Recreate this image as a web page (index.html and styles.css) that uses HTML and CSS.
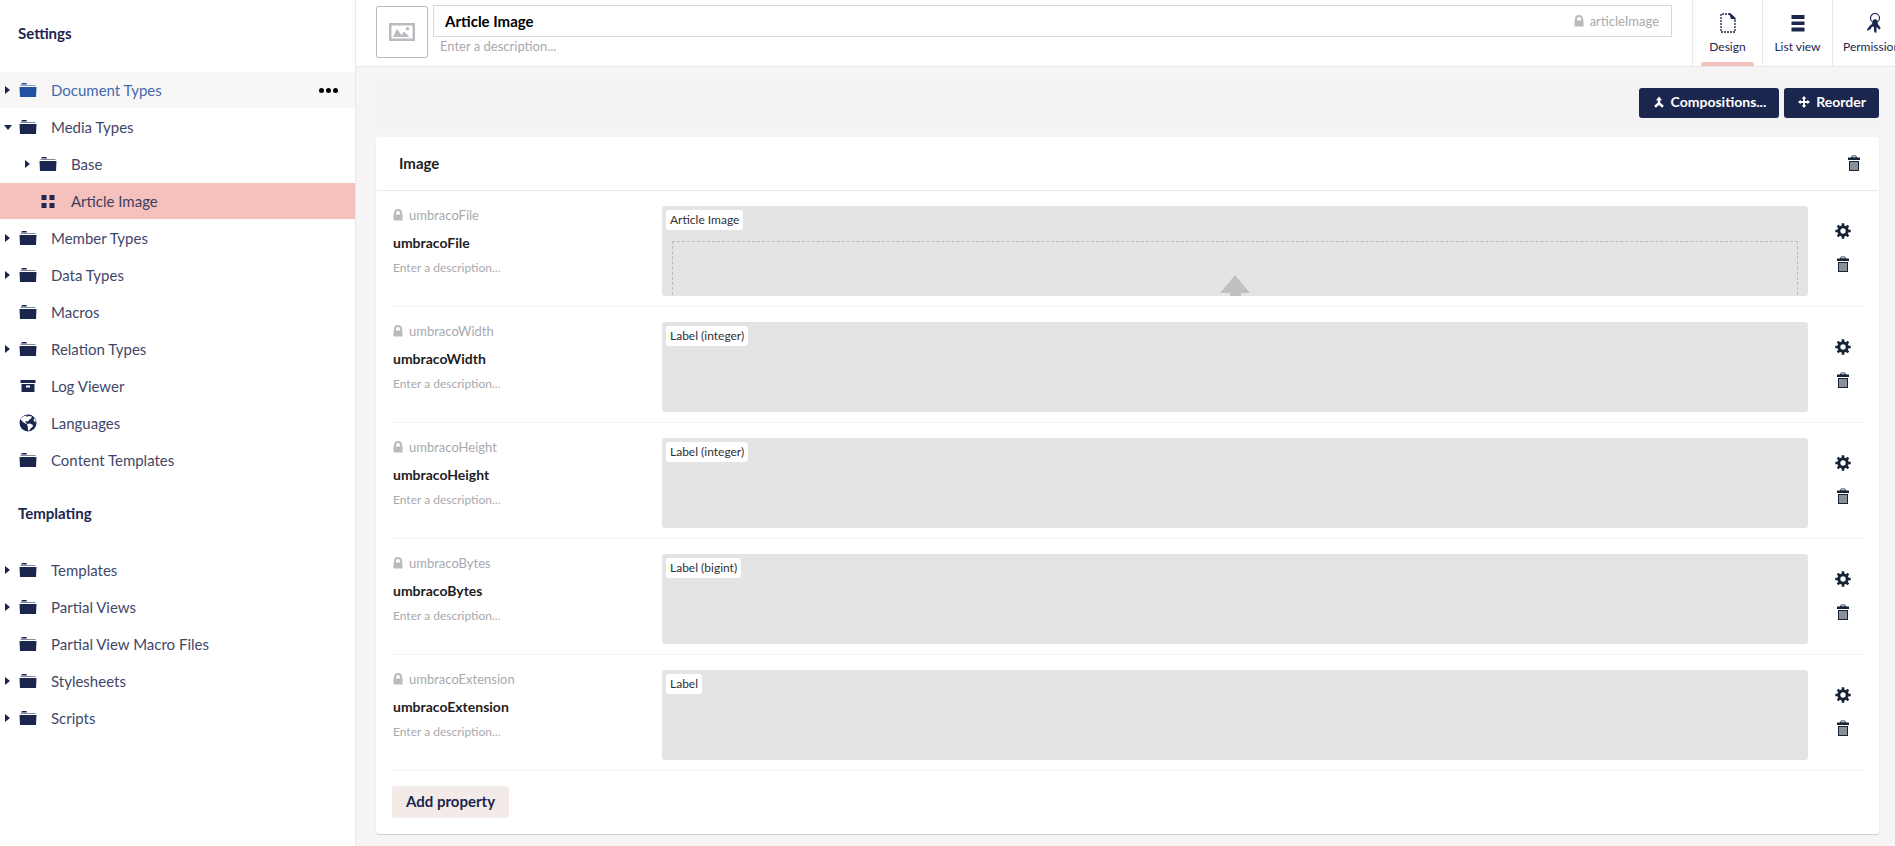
FILE: index.html
```html
<!DOCTYPE html>
<html lang="en">
<head>
    <meta charset="UTF-8">
    <meta name="viewport" content="width=device-width, initial-scale=1.0">
    <title>Article Image - Media Types</title>
    <link rel="stylesheet" href="styles.css">
</head>
<body>
    <svg class="sprite" aria-hidden="true">
        <symbol id="folder" viewBox="0 0 18 18">
            <path d="M2 3.500L3 2h4.500l.5 1.500z"/>
            <path d="M1.500 4h15v1h-15z" opacity=".55"/>
            <path d="M.5 6h17L17 16H1z"/>
        </symbol>
        <symbol id="grid" viewBox="0 0 18 18">
            <path d="M2.500 3h5v5h-5zM10.500 3h5v5h-5zM2.500 11h5v5h-5zM10.500 11h5v5h-5z"/>
        </symbol>
        <symbol id="archive" viewBox="0 0 18 18">
            <path d="M1.500 3h15v3h-15z"/>
            <path fill-rule="evenodd" d="M2.500 7h13v8h-13zM7 8.500v2h4v-2z"/>
        </symbol>
        <symbol id="globe" viewBox="0 0 18 18">
            <circle cx="9" cy="9" r="8.500"/>
            <path fill="#fff" d="M2 4.500L5 2l3-.6L7 3l3-1 3 .5-1 2-1.500 1-1.500 2L7.500 7 6 8l2 1.500-1 .5L4 8 2 6zM8 10l3-.5 3 1.500-.5 2-2 1.500L10 17l-1-1-.2-3zM14.500 5l1.500-.5 1 3-2 .2z"/>
        </symbol>
        <symbol id="lock" viewBox="0 0 10 12">
            <path fill-rule="evenodd" d="M.5 5.500H1V4a4 4 0 0 1 8 0v1.500h.5v6h-9zM3 5.500h4V4a2 2 0 0 0-4 0z"/>
        </symbol>
        <symbol id="picture" viewBox="0 0 26 18">
            <path fill-rule="evenodd" d="M0 0h26v18H0zM2.500 2.500v13h21v-13z"/>
            <path d="M4 14l4-8 4.500 6L15 8.500l5.500 5.500z"/>
            <circle cx="18.500" cy="5.800" r="1.800"/>
        </symbol>
        <symbol id="document" viewBox="0 0 16 20">
            <path fill="none" stroke="currentColor" stroke-width="1.300" stroke-dasharray="2 1" d="M10 1H1v18h14V6"/>
            <path d="M9 .2h1.500L15.600 5v2.500L14 6h-3z"/>
        </symbol>
        <symbol id="list" viewBox="0 0 20 20">
            <path d="M3.500 2h13v4h-13zM3.500 8.500h13v3.500h-13zM3.500 14.500h13v4h-13z"/>
        </symbol>
        <symbol id="keys" viewBox="0 0 14 20">
            <circle cx="8" cy="5" r="4.500" fill="none" stroke="currentColor" stroke-width="1.200"/>
            <path d="M6 7l2.500-1L11 8l-.5 2 1 2 2 2.500-.5 2-1.500-.5-1.500-2-.5 1v4.500l-1.500.2L7 18v-4l-1.500-.5L4 15l-.5 1.500-1.500.3L.5 18 0 16.500l2.500-3.500L5 11z"/>
        </symbol>
        <symbol id="merge" viewBox="0 0 12 12">
            <path d="M6 .5l3 3.800H7.300v2.500l3.500 3-1.600 2L6 9l-3.200 2.800-1.600-2 3.500-3V4.300H3z"/>
        </symbol>
        <symbol id="move" viewBox="0 0 12 12">
            <path d="M6 0l2.300 2.700H6.900v2.400h2.400V3.700L12 6 9.300 8.300V6.900H6.900v2.400h1.400L6 12 3.700 9.300h1.400V6.900H2.700v1.400L0 6l2.700-2.300v1.400h2.400V2.700H3.700z"/>
        </symbol>
        <symbol id="trash" viewBox="0 0 12 16">
            <path d="M0 2.500h3L4 .5h4l1 2h3V5H0zM4.500 1.300l-.5 1h4l-.5-1z" fill-rule="evenodd"/>
            <path fill-rule="evenodd" d="M1 6h10v10H1zM2.500 7v8h1V7zM4.500 7v8h1V7zM6.500 7v8h1V7zM8.500 7v8h1V7z"/>
        </symbol>
        <symbol id="gear" viewBox="0 0 16 16">
            <circle cx="8" cy="8" r="4.200" fill="none" stroke="currentColor" stroke-width="3"/>
            <path fill="none" stroke="currentColor" stroke-width="2.600" d="M8 .3v3M8 12.700v3M.3 8h3M12.700 8h3M2.600 2.600l2 2M11.400 11.400l2 2M2.600 13.400l2-2M11.400 4.600l2-2"/>
        </symbol>
        <symbol id="upload" viewBox="0 0 30 30">
            <path d="M15 0l15 18h-9v12H10V18H0z"/>
        </symbol>
    </svg>

    <div class="app">
        <nav class="sidebar" aria-label="Settings tree">
            <section class="tree">
                <h5>Settings</h5>
                <ul>
                    <li class="hover"><span class="caret"></span><svg class="icon"><use href="#folder"/></svg><a href="#">Document Types</a><button class="dots" aria-label="Options"><i></i><i></i><i></i></button></li>
                    <li><span class="caret open"></span><svg class="icon"><use href="#folder"/></svg><a href="#">Media Types</a></li>
                    <li class="child"><span class="caret"></span><svg class="icon"><use href="#folder"/></svg><a href="#">Base</a></li>
                    <li class="child current"><span class="caret none"></span><svg class="icon"><use href="#grid"/></svg><a href="#">Article Image</a></li>
                    <li><span class="caret"></span><svg class="icon"><use href="#folder"/></svg><a href="#">Member Types</a></li>
                    <li><span class="caret"></span><svg class="icon"><use href="#folder"/></svg><a href="#">Data Types</a></li>
                    <li><span class="caret none"></span><svg class="icon"><use href="#folder"/></svg><a href="#">Macros</a></li>
                    <li><span class="caret"></span><svg class="icon"><use href="#folder"/></svg><a href="#">Relation Types</a></li>
                    <li><span class="caret none"></span><svg class="icon"><use href="#archive"/></svg><a href="#">Log Viewer</a></li>
                    <li><span class="caret none"></span><svg class="icon"><use href="#globe"/></svg><a href="#">Languages</a></li>
                    <li><span class="caret none"></span><svg class="icon"><use href="#folder"/></svg><a href="#">Content Templates</a></li>
                </ul>
            </section>
            <section class="tree">
                <h5>Templating</h5>
                <ul>
                    <li><span class="caret"></span><svg class="icon"><use href="#folder"/></svg><a href="#">Templates</a></li>
                    <li><span class="caret"></span><svg class="icon"><use href="#folder"/></svg><a href="#">Partial Views</a></li>
                    <li><span class="caret none"></span><svg class="icon"><use href="#folder"/></svg><a href="#">Partial View Macro Files</a></li>
                    <li><span class="caret"></span><svg class="icon"><use href="#folder"/></svg><a href="#">Stylesheets</a></li>
                    <li><span class="caret"></span><svg class="icon"><use href="#folder"/></svg><a href="#">Scripts</a></li>
                </ul>
            </section>
        </nav>

        <main class="editor">
            <header class="editor-header">
                <button class="icon-picker" aria-label="Choose icon"><svg><use href="#picture"/></svg></button>
                <div class="name-desc">
                    <div class="name-box">
                        <input type="text" value="Article Image" aria-label="Name">
                        <span class="alias"><svg class="lock"><use href="#lock"/></svg>articleImage</span>
                    </div>
                    <input type="text" class="desc" placeholder="Enter a description..." aria-label="Description">
                </div>
                <div class="apps">
                    <button class="app-tab active"><svg><use href="#document"/></svg>Design</button>
                    <button class="app-tab"><svg><use href="#list"/></svg>List view</button>
                    <button class="app-tab"><svg><use href="#keys"/></svg>Permissions</button>
                </div>
            </header>

            <div class="content">
                <div class="toolbar">
                    <button class="btn"><svg><use href="#merge"/></svg>Compositions...</button>
                    <button class="btn"><svg><use href="#move"/></svg>Reorder</button>
                </div>

                <section class="group">
                    <div class="group-header">
                        <input type="text" value="Image" aria-label="Group name">
                        <button class="tool" aria-label="Delete group"><svg class="trash"><use href="#trash"/></svg></button>
                    </div>
                    <div class="group-body">
                        <div class="property">
                            <div class="meta">
                                <span class="alias"><svg class="lock"><use href="#lock"/></svg>umbracoFile</span>
                                <input type="text" class="label" value="umbracoFile" aria-label="Property name">
                                <input type="text" class="info" placeholder="Enter a description..." aria-label="Property description">
                            </div>
                            <div class="preview">
                                <span class="tag">Article Image</span>
                                <div class="dropzone"><svg><use href="#upload"/></svg></div>
                            </div>
                            <div class="actions">
                                <button class="tool" aria-label="Edit property"><svg class="gear"><use href="#gear"/></svg></button>
                                <button class="tool" aria-label="Delete property"><svg class="trash"><use href="#trash"/></svg></button>
                            </div>
                        </div>
                        <div class="property">
                            <div class="meta">
                                <span class="alias"><svg class="lock"><use href="#lock"/></svg>umbracoWidth</span>
                                <input type="text" class="label" value="umbracoWidth" aria-label="Property name">
                                <input type="text" class="info" placeholder="Enter a description..." aria-label="Property description">
                            </div>
                            <div class="preview"><span class="tag">Label (integer)</span></div>
                            <div class="actions">
                                <button class="tool" aria-label="Edit property"><svg class="gear"><use href="#gear"/></svg></button>
                                <button class="tool" aria-label="Delete property"><svg class="trash"><use href="#trash"/></svg></button>
                            </div>
                        </div>
                        <div class="property">
                            <div class="meta">
                                <span class="alias"><svg class="lock"><use href="#lock"/></svg>umbracoHeight</span>
                                <input type="text" class="label" value="umbracoHeight" aria-label="Property name">
                                <input type="text" class="info" placeholder="Enter a description..." aria-label="Property description">
                            </div>
                            <div class="preview"><span class="tag">Label (integer)</span></div>
                            <div class="actions">
                                <button class="tool" aria-label="Edit property"><svg class="gear"><use href="#gear"/></svg></button>
                                <button class="tool" aria-label="Delete property"><svg class="trash"><use href="#trash"/></svg></button>
                            </div>
                        </div>
                        <div class="property">
                            <div class="meta">
                                <span class="alias"><svg class="lock"><use href="#lock"/></svg>umbracoBytes</span>
                                <input type="text" class="label" value="umbracoBytes" aria-label="Property name">
                                <input type="text" class="info" placeholder="Enter a description..." aria-label="Property description">
                            </div>
                            <div class="preview"><span class="tag">Label (bigint)</span></div>
                            <div class="actions">
                                <button class="tool" aria-label="Edit property"><svg class="gear"><use href="#gear"/></svg></button>
                                <button class="tool" aria-label="Delete property"><svg class="trash"><use href="#trash"/></svg></button>
                            </div>
                        </div>
                        <div class="property">
                            <div class="meta">
                                <span class="alias"><svg class="lock"><use href="#lock"/></svg>umbracoExtension</span>
                                <input type="text" class="label" value="umbracoExtension" aria-label="Property name">
                                <input type="text" class="info" placeholder="Enter a description..." aria-label="Property description">
                            </div>
                            <div class="preview"><span class="tag">Label</span></div>
                            <div class="actions">
                                <button class="tool" aria-label="Edit property"><svg class="gear"><use href="#gear"/></svg></button>
                                <button class="tool" aria-label="Delete property"><svg class="trash"><use href="#trash"/></svg></button>
                            </div>
                        </div>
                        <button class="add">Add property</button>
                    </div>
                </section>
            </div>
        </main>
    </div>
</body>
</html>
```
FILE: styles.css
```css
* {
    box-sizing: border-box;
}
body {
    margin: 0;
    font-family: Lato, sans-serif;
    font-size: 15px;
    line-height: 20px;
    color: #1b264f;
    background: #f6f4f5;
}
button, input {
    font: inherit;
    color: inherit;
    margin: 0;
    padding: 0;
    border: 0;
    background: none;
}
button {
    cursor: pointer;
}
input {
    min-width: 0;
}
input::placeholder {
    color: #a9a9ad;
    opacity: 1;
}
svg {
    display: block;
    flex: none;
    fill: currentColor;
}
.sprite {
    position: absolute;
    width: 0;
    height: 0;
}
.app {
    display: flex;
    min-height: 100vh;
}

/* Tree */
.sidebar {
    flex: 0 0 356px;
    background: #fff;
    border-right: 1px solid #e9e9eb;
}
.tree + .tree {
    margin-top: 2px;
}
.tree h5 {
    margin: 0 0 6px;
    padding: 23px 18px;
    font-size: 15px;
    font-weight: 700;
}
.tree ul {
    margin: 0;
    padding: 0;
    list-style: none;
}
.tree li {
    display: flex;
    align-items: center;
    height: 36px;
    margin-bottom: 1px;
    padding: 0 12px 0 5px;
}
.tree li.child {
    padding-left: 25px;
}
.tree li.hover {
    background: #f9f6f6;
    color: #2152a3;
}
.tree li.current {
    background: #f5c1bc;
}
.tree a {
    flex: 1;
    margin-left: 14px;
    color: inherit;
    text-decoration: none;
    opacity: .85;
}
.icon {
    width: 18px;
    height: 18px;
}
.caret {
    width: 14px;
}
.caret::before {
    content: "";
    display: block;
    width: 0;
    border: solid transparent;
    border-width: 4px 0 4px 5px;
    border-left-color: #1b264f;
}
.caret.open::before {
    margin-left: -1px;
    border-width: 5px 4px 0;
    border-color: #1b264f transparent;
}
.caret.none::before {
    visibility: hidden;
}
.dots {
    display: flex;
    gap: 2px;
    padding: 5px;
}
.dots i {
    width: 5px;
    height: 5px;
    border-radius: 50%;
    background: #000;
}

/* Editor header */
.editor {
    flex: 1;
    min-width: 0;
}
.editor-header {
    display: flex;
    height: 67px;
    padding-left: 20px;
    background: #fff;
    border-bottom: 1px solid #e9e9eb;
    overflow: hidden;
}
.icon-picker {
    display: flex;
    align-items: center;
    justify-content: center;
    width: 52px;
    height: 52px;
    margin-top: 6px;
    border: 1px solid #bbbabf;
    border-radius: 3px;
    color: #bbbabf;
}
.icon-picker svg {
    width: 26px;
    height: 18px;
}
.name-desc {
    flex: 1;
    display: flex;
    flex-direction: column;
    margin: 5px 20px 0 5px;
}
.name-box {
    display: flex;
    align-items: center;
    height: 32px;
    padding: 0 12px 1px 11px;
    border: 1px solid #d8d7d9;
}
.name-box input {
    flex: 1;
    height: 28px;
    font-weight: 700;
    color: #000;
}
.alias {
    display: flex;
    align-items: center;
    gap: 6px;
    line-height: 18px;
    font-size: 13px;
    color: #a9a9ad;
}
.lock {
    width: 10px;
    height: 12px;
    color: #bbbabf;
}
.desc {
    padding-left: 7px;
    height: 18px;
    font-size: 13px;
}
.apps {
    flex: 0 0 203px;
    display: flex;
    min-width: 0;
}
.app-tab {
    flex: none;
    display: flex;
    flex-direction: column;
    align-items: center;
    min-width: 70px;
    padding: 13px 10px 0;
    border-left: 1px solid #e9e9eb;
    font-size: 12px;
}
.app-tab svg {
    width: 20px;
    height: 20px;
    margin-bottom: 4px;
}
.app-tab.active::after {
    content: "";
    align-self: stretch;
    height: 4px;
    margin: 5px -2px 0;
    border-radius: 3px 3px 0 0;
    background: #f5c1bc;
}

/* Content */
.content {
    padding: 11px 16px 12px 20px;
}
.toolbar {
    display: flex;
    justify-content: flex-end;
    align-items: center;
    gap: 5px;
    height: 49px;
    margin-bottom: 10px;
    background: #f3f3f5;
}
.btn {
    display: flex;
    align-items: center;
    gap: 6px;
    height: 30px;
    padding: 0 13px 1px 14px;
    border-radius: 3px;
    background: #1b264f;
    color: #fff;
    font-size: 14px;
    font-weight: 700;
}
.btn svg {
    width: 12px;
    height: 12px;
}
.group {
    border-radius: 3px;
    background: #fff;
    box-shadow: 0 1px 1px rgba(0, 0, 0, .16);
}
.group-header {
    display: flex;
    align-items: center;
    justify-content: space-between;
    height: 54px;
    margin: 0 1px;
    padding: 0 14px 2px 22px;
    border-bottom: 1px solid #e9e9eb;
}
.group-header input {
    font-weight: 700;
    color: #1d1d1f;
}
.group-body {
    padding: 0 16px 16px;
}
.property {
    display: flex;
    padding: 15px 0 10px;
    border-bottom: 1px solid #f3f3f5;
}
.meta {
    flex: 0 0 270px;
    display: flex;
    flex-direction: column;
    padding-left: 1px;
}
.meta .label {
    height: 20px;
    margin: 9px 0 5px;
    font-size: 14px;
    font-weight: 700;
    color: #1d1d1f;
}
.meta .info {
    height: 20px;
    font-size: 12px;
}
.preview {
    flex: 1;
    height: 90px;
    padding: 4px;
    border-radius: 3px;
    background: #e4e4e4;
    overflow: hidden;
}
.tag {
    display: block;
    width: fit-content;
    padding: 0 4px;
    border-radius: 3px;
    background: #fff;
    color: #303033;
    font-size: 12px;
}
.dropzone {
    display: flex;
    justify-content: center;
    height: 90px;
    margin: 11px 6px 0;
    padding-top: 33px;
    border: 1px dashed #bbbabf;
}
.dropzone svg {
    width: 30px;
    height: 30px;
    color: #c0c0c2;
}
.actions {
    flex: 0 0 55px;
    display: flex;
    flex-direction: column;
    align-items: center;
    gap: 13px;
    padding: 15px 0 0 15px;
}
.tool {
    display: flex;
    align-items: center;
    justify-content: center;
    width: 20px;
    height: 20px;
    color: #162335;
}
.gear {
    width: 16px;
    height: 16px;
}
.trash {
    width: 12px;
    height: 16px;
}
.add {
    height: 32px;
    margin-top: 15px;
    padding: 0 14px 2px;
    border-radius: 3px;
    background: #f3ebe8;
    font-weight: 700;
}
```
